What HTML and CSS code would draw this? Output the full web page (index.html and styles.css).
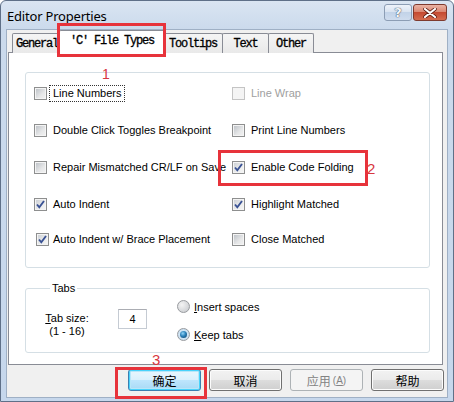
FILE: index.html
```html
<!DOCTYPE html>
<html>
<head>
<meta charset="utf-8">
<link rel="stylesheet" href="styles.css">
</head>
<body>
<div class="window">
  <div class="titlebar">
    <span class="title">Editor Properties</span>
    <div class="caption-btns">
      <span class="cbtn help">?</span>
      <span class="cbtn close"><svg width="14" height="10" viewBox="0 0 14 10"><path d="M2 1 L12 9 M12 1 L2 9" stroke="#5a1a10" stroke-width="3.6" stroke-linecap="round"/><path d="M2 1 L12 9 M12 1 L2 9" stroke="#fff" stroke-width="2.2" stroke-linecap="round"/></svg></span>
    </div>
  </div>
  <div class="client">
    <div class="tabs">
      <span class="tab t-general">General</span>
      <span class="tab active">'C' File Types</span>
      <span class="tab t-tooltips">Tooltips</span>
      <span class="tab t-text">Text</span>
      <span class="tab t-other">Other</span>
    </div>
    <div class="panel">
      <div class="group options">
        <label class="opt"><span class="cb"></span><span class="lbl focus">Line Numbers</span></label>
        <label class="opt disabled"><span class="cb"></span><span class="lbl">Line Wrap</span></label>
        <label class="opt"><span class="cb"></span><span class="lbl">Double Click Toggles Breakpoint</span></label>
        <label class="opt"><span class="cb"></span><span class="lbl">Print Line Numbers</span></label>
        <label class="opt"><span class="cb"></span><span class="lbl">Repair Mismatched CR/LF on Save</span></label>
        <label class="opt"><span class="cb checked"><svg width="11" height="11" viewBox="0 0 11 11"><path d="M2 5.5 L4.3 8.3 L9 2" fill="none" stroke="#3a5294" stroke-width="1.9"/></svg></span><span class="lbl">Enable Code Folding</span></label>
        <label class="opt"><span class="cb checked"><svg width="11" height="11" viewBox="0 0 11 11"><path d="M2 5.5 L4.3 8.3 L9 2" fill="none" stroke="#3a5294" stroke-width="1.9"/></svg></span><span class="lbl">Auto Indent</span></label>
        <label class="opt"><span class="cb checked"><svg width="11" height="11" viewBox="0 0 11 11"><path d="M2 5.5 L4.3 8.3 L9 2" fill="none" stroke="#3a5294" stroke-width="1.9"/></svg></span><span class="lbl">Highlight Matched</span></label>
        <label class="opt brace"><span class="cb checked"><svg width="11" height="11" viewBox="0 0 11 11"><path d="M2 5.5 L4.3 8.3 L9 2" fill="none" stroke="#3a5294" stroke-width="1.9"/></svg></span><span class="lbl">Auto Indent w/ Brace Placement</span></label>
        <label class="opt"><span class="cb"></span><span class="lbl">Close Matched</span></label>
      </div>
      <fieldset class="tabsgroup">
        <legend>Tabs</legend>
        <div class="tabs-body">
          <div class="tabsize"><span><u>T</u>ab size:</span><span>(1 - 16)</span></div>
          <div class="numbox">4</div>
          <div class="radios">
            <label class="radio"><span class="rb"></span><span><u>I</u>nsert spaces</span></label>
            <label class="radio"><span class="rb on"></span><span><u>K</u>eep tabs</span></label>
          </div>
        </div>
      </fieldset>
    </div>
    <div class="buttons">
      <span class="btn default">确定</span>
      <span class="btn">取消</span>
      <span class="btn disabled">应用<span class="acc">(<u>A</u>)</span></span>
      <span class="btn">帮助</span>
    </div>
  </div>
  <div class="anno box1"></div>
  <div class="anno box2"></div>
  <div class="anno box3"></div>
  <span class="anno-num n1">1</span>
  <span class="anno-num n2">2</span>
  <span class="anno-num n3">3</span>
</div>
</body>
</html>
```
FILE: styles.css
```css
html, body {
  margin: 0;
  padding: 0;
}
body {
  width: 454px;
  height: 402px;
  overflow: hidden;
  font-family: "Liberation Sans", Arial, sans-serif;
  font-size: 11px;
  color: #000;
  background: #fff;
}
.window {
  position: relative;
  width: 454px;
  height: 402px;
  box-sizing: border-box;
  border: 1px solid #5f7088;
  border-radius: 6px 6px 0 0;
  background: linear-gradient(#dae5f2, #cbdaec 28px, #c6d7ec);
  display: flex;
  flex-direction: column;
  padding: 0 5px 3px 5px;
}
.titlebar {
  height: 28px;
  flex: none;
  display: flex;
  justify-content: space-between;
  align-items: flex-start;
}
.title {
  font-family: "Noto Sans", sans-serif;
  font-size: 13px;
  letter-spacing: -0.2px;
  line-height: 20px;
  margin: 5px 0 0 1px;
  color: #000;
}
.caption-btns {
  display: flex;
  gap: 1px;
  margin-top: 3px;
  margin-right: 1px;
}
.cbtn {
  box-sizing: border-box;
  height: 17px;
  display: flex;
  align-items: center;
  justify-content: center;
  border-radius: 3px;
}
.help {
  width: 28px;
  border: 1px solid #8c9db4;
  background: linear-gradient(#eef3fa, #d7e2f0 50%, #c2d3e8 50%, #cfdcee);
  color: #f4f7fb;
  font-family: "DejaVu Sans", sans-serif;
  font-weight: bold;
  font-size: 13px;
  text-shadow: 0 0 1px #34445c, 0 0 1px #34445c;
}
.close {
  width: 34px;
  border: 1px solid #7e3a2e;
  background: linear-gradient(#eab3a4, #d9836d 50%, #c54a31 50%, #d46c4f);
}
.client {
  flex: 1;
  display: flex;
  flex-direction: column;
  background: #f0f0f0;
  border: 1px solid #9fb0c5;
}
.tabs {
  display: flex;
  align-items: flex-end;
  height: 23px;
  padding-left: 5px;
  position: relative;
  z-index: 2;
}
.tab {
  box-sizing: border-box;
  height: 20px;
  border: 1px solid #898c95;
  border-bottom: none;
  border-radius: 2px 2px 0 0;
  background: linear-gradient(#f5f5f5, #e9e9e9);
  margin-right: -1px;
  display: flex;
  align-items: center;
  justify-content: center;
  font-family: "Liberation Mono", monospace;
  font-size: 12px;
  letter-spacing: -1.2px;
  -webkit-text-stroke: 0.3px #000;
  color: #000;
  padding-top: 1px;
}
.t-general { width: 50px; }
.tab.active {
  width: 106px;
  height: 23px;
  margin-left: -2px;
  margin-right: -2px;
  background: #fff;
  position: relative;
  z-index: 3;
  padding-top: 0;
  padding-bottom: 2px;
}
.t-tooltips { width: 60px; }
.t-text { width: 47px; }
.t-other { width: 46px; }
.panel {
  box-sizing: border-box;
  height: 313px;
  margin: -1px 4px 0 1px;
  border: 1px solid #898c95;
  background: #fff;
  padding: 19px 12px 0 16px;
  position: relative;
  z-index: 1;
}
.group {
  box-sizing: border-box;
  border: 1px solid #d5dfe5;
  border-radius: 3px;
  box-shadow: inset 1px 1px 0 #fff, 1px 1px 0 #fff;
}
.options {
  height: 196px;
  display: grid;
  grid-template-columns: 198px 1fr;
  grid-template-rows: 37px 37px 37px 37px 32px;
  align-items: center;
  padding: 2px 0 0 8px;
}
.opt {
  display: flex;
  align-items: center;
}
.cb {
  box-sizing: border-box;
  width: 13px;
  height: 13px;
  border: 1px solid #8e8f8f;
  background: linear-gradient(135deg, #b9bec4, #e6e7e8 60%, #f2f2f2);
  box-shadow: inset 0 0 0 1px #f4f4f4;
  margin-right: 2px;
  display: flex;
  align-items: center;
  justify-content: center;
  flex: none;
}
.cb.checked {
  background: linear-gradient(135deg, #c8ccd2, #eceded 60%, #f6f6f6);
}
.cb svg { display: block; }
.lbl {
  border: 1px dotted transparent;
  padding: 0 3px;
  line-height: 15px;
}
.lbl.focus {
  border-color: #333;
}
.disabled .cb {
  border-color: #c4c4c4;
  background: #f4f4f4;
  box-shadow: none;
}
.disabled .lbl {
  color: #a0a0a0;
}
.brace .cb {
  margin-left: 2px;
  margin-right: 0;
}
.tabsgroup {
  margin: 14px 0 0 0;
  padding: 0 0 0 19px;
  height: 71px;
  box-sizing: border-box;
  border: 1px solid #d5dfe5;
  border-radius: 3px;
  box-shadow: inset 1px 1px 0 #fff, 1px 1px 0 #fff;
  width: 405px;
}
.tabsgroup legend {
  padding: 0 2px;
  margin-left: 5px;
  line-height: 13px;
  font-size: 11px;
}
.tabs-body {
  display: flex;
  align-items: flex-start;
}
.tabsize {
  display: flex;
  flex-direction: column;
  align-items: center;
  line-height: 13px;
  margin-top: 17px;
  width: 44px;
}
.numbox {
  box-sizing: border-box;
  width: 29px;
  height: 20px;
  margin: 14px 0 0 29px;
  border: 1px solid #c5cbd3;
  border-top-color: #abadb3;
  display: flex;
  align-items: center;
  justify-content: center;
  font-size: 11px;
}
.radios {
  display: flex;
  flex-direction: column;
  gap: 15px;
  margin: 5px 0 0 30px;
}
.radio {
  display: flex;
  align-items: center;
  height: 13px;
}
.rb {
  box-sizing: border-box;
  width: 13px;
  height: 13px;
  border-radius: 50%;
  border: 1px solid #979a9e;
  background: radial-gradient(circle at 35% 35%, #f4f4f4, #d2d4d7 70%, #c3c6ca);
  margin-right: 4px;
  display: flex;
  align-items: center;
  justify-content: center;
}
.rb.on::after {
  content: "";
  width: 7px;
  height: 7px;
  border-radius: 50%;
  background: radial-gradient(circle at 40% 35%, #8fd3f6, #2a80b9 45%, #0d3b62);
}
.rb.on {
  background: radial-gradient(circle, #e9f3fb, #c4dcef 80%);
}
.buttons {
  display: flex;
  justify-content: flex-end;
  gap: 8px;
  margin-top: 4px;
  padding-right: 3px;
}
.btn {
  box-sizing: border-box;
  width: 73px;
  height: 22px;
  border: 1px solid #707070;
  border-radius: 3px;
  background: linear-gradient(#f2f2f2, #ebebeb 50%, #dddddd 50%, #cfcfcf);
  box-shadow: inset 0 0 0 1px #fcfcfc;
  display: flex;
  align-items: center;
  justify-content: center;
  font-family: "Noto Sans CJK SC", sans-serif;
  font-size: 12px;
  color: #000;
}
.btn.default {
  border-color: #3c7fb1;
  box-shadow: inset 0 0 0 1px #48d2fb, inset 0 0 0 2px #b8e6f8;
  background: linear-gradient(#eaf6fd, #d9f0fc 50%, #bee6fd 50%, #a7d9f5);
}
.btn.disabled {
  border-color: #adb2b5;
  background: #f4f4f4;
  box-shadow: none;
  color: #838383;
}
.acc {
  font-family: "Liberation Sans", sans-serif;
  font-size: 10px;
  margin-left: 2px;
}
.anno {
  position: absolute;
  box-sizing: border-box;
  border: 3px solid #e7333b;
  z-index: 10;
}
.box1 { left: 56px; top: 22px; width: 109px; height: 34px; }
.box2 { left: 217px; top: 149px; width: 150px; height: 36px; }
.box3 { left: 114px; top: 366px; width: 92px; height: 32px; }
.anno-num {
  position: absolute;
  font-family: "Liberation Sans", sans-serif;
  font-size: 14px;
  color: #d8373e;
  z-index: 10;
  line-height: 14px;
}
.n1 { left: 101px; top: 66px; }
.n2 { left: 366px; top: 161px; font-size: 15px; }
.n3 { left: 151px; top: 352px; font-size: 15px; }
```
